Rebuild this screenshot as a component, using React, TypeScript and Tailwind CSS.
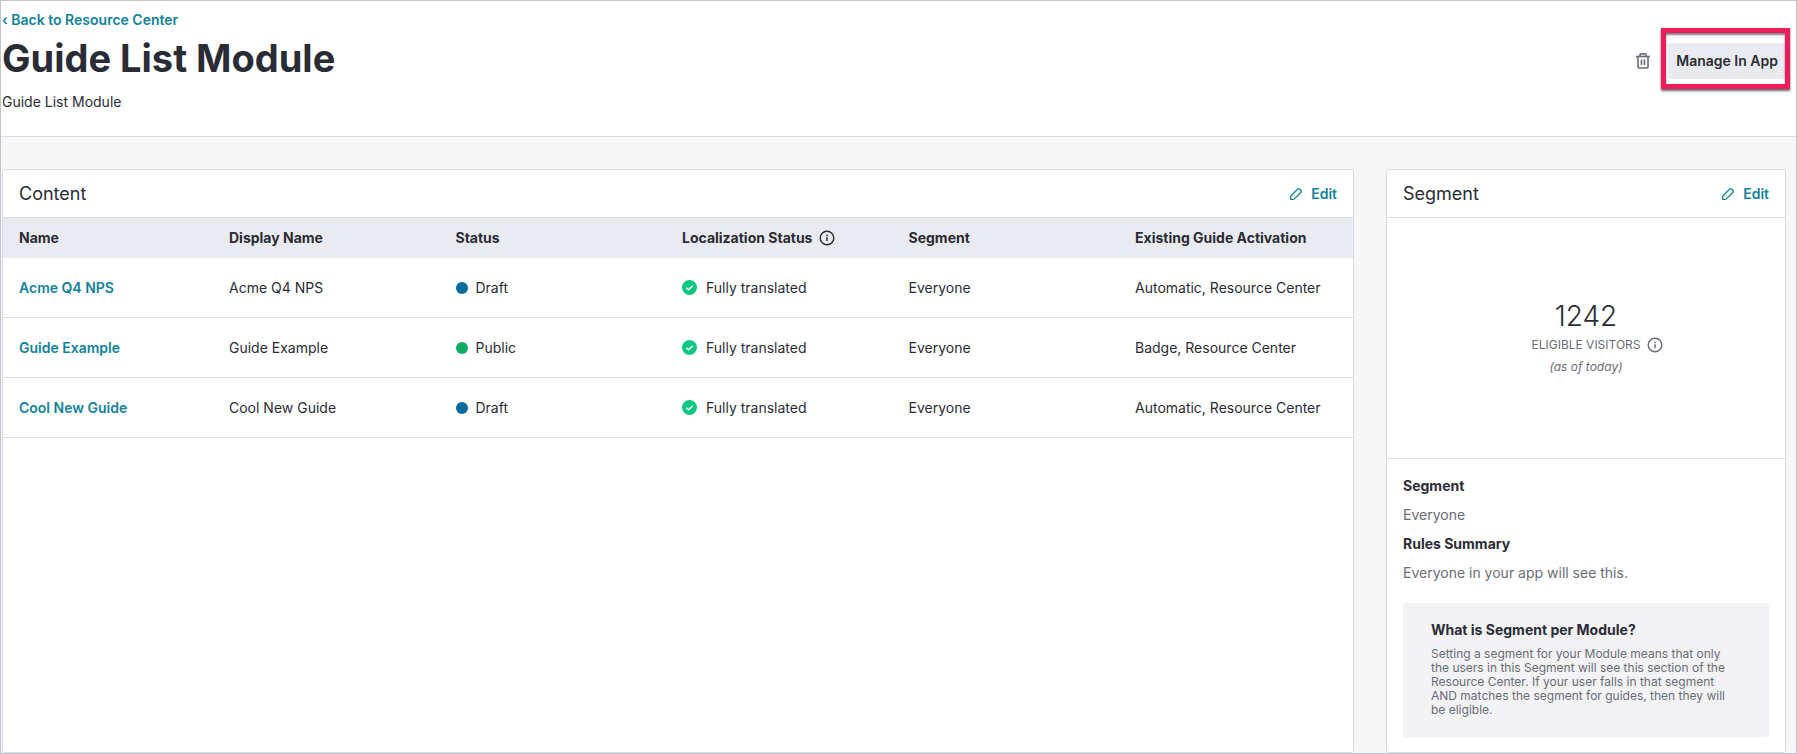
import type { ReactNode } from "react";

const GUIDES = [
  { name: "Acme Q4 NPS", status: "Draft", dot: "bg-[#066a9e]", segment: "Everyone", activation: "Automatic, Resource Center" },
  { name: "Guide Example", status: "Public", dot: "bg-[#0fad62]", segment: "Everyone", activation: "Badge, Resource Center" },
  { name: "Cool New Guide", status: "Draft", dot: "bg-[#066a9e]", segment: "Everyone", activation: "Automatic, Resource Center" },
];

function InfoIcon() {
  return (
    <svg className="size-4 shrink-0" viewBox="0 0 16 16" fill="none" aria-hidden="true">
      <circle cx="8" cy="8" r="6.8" stroke="currentColor" strokeWidth="1.4" />
      <path d="M8 7.2v3.8" stroke="currentColor" strokeWidth="1.5" />
      <circle cx="8" cy="5.4" r="0.9" fill="currentColor" />
    </svg>
  );
}

function PencilIcon() {
  return (
    <svg className="size-3.5" viewBox="0 0 14 14" fill="none" stroke="currentColor" strokeWidth="1.3" strokeLinejoin="round" aria-hidden="true">
      <path d="M1.7 12.3v-2.6a1.400 1.400 0 0 1 .4-1l6.700-6.700a1.200 1.200 0 0 1 1.700 0l1.500 1.500a1.200 1.200 0 0 1 0 1.700l-6.700 6.700a1.400 1.400 0 0 1-1 .4z" />
    </svg>
  );
}

function CheckIcon() {
  return (
    <svg className="size-[15px] shrink-0" viewBox="0 0 15 15" fill="none" aria-hidden="true">
      <circle cx="7.5" cy="7.5" r="7.5" fill="#0bc783" />
      <path d="M4.3 7.7l2.2 2 4.2-4" stroke="#fff" strokeWidth="1.4" />
    </svg>
  );
}

function TrashIcon() {
  return (
    <svg className="h-4 w-[14px]" viewBox="0 0 14 16" fill="none" stroke="currentColor" strokeWidth="1.6" aria-hidden="true">
      <path d="M0 3.5h14" />
      <path d="M4 3.3V1.7a.8.8 0 0 1 .8-.8h4.4a.8.8 0 0 1 .8.8v1.6" />
      <path d="M2 3.5V14a1 1 0 0 0 1 1h8a1 1 0 0 0 1-1V3.5" />
      <path d="M5.5 6.5V12M8.5 6.5V12" />
    </svg>
  );
}

function CardHeader({ title }: { title: string }) {
  return (
    <div className="flex h-12 items-center justify-between border-b border-[#dadce5] px-4">
      <h2 className="text-lg">{title}</h2>
      <button type="button" aria-label={`Edit ${title}`} className="flex items-center gap-2 text-sm font-semibold text-[#128297]">
        <PencilIcon />
        Edit
      </button>
    </div>
  );
}

function Th({ children }: { children: ReactNode }) {
  return (
    <th scope="col" className="px-4 text-left font-bold whitespace-nowrap">
      {children}
    </th>
  );
}

function Td({ children }: { children: ReactNode }) {
  return <td className="h-[60px] border-b border-[#dadce5] px-4 whitespace-nowrap">{children}</td>;
}

export default function App() {
  return (
    <div className="flex min-h-screen flex-col border border-[#bfc6cb] bg-[#f7f7f8] font-[Inter,sans-serif] text-sm text-[#2a2c35]">
      <header className="flex items-center justify-between border-b border-[#dadce5] bg-white pt-[9px] pr-[10px] pb-5 pl-px">
        <div>
          <a href="#resource-center" className="block leading-5 font-semibold text-[#128297]">
            ‹ Back to Resource Center
          </a>
          <h1 className="mt-2 text-[38px] leading-10 font-bold">Guide List Module</h1>
          <p className="mt-[14px] mb-1 leading-5">Guide List Module</p>
        </div>
        <div className="flex items-center gap-[18px] pb-1">
          <button type="button" aria-label="Delete module" className="text-[#6a6c75]">
            <TrashIcon />
          </button>
          <div className="relative">
            <button type="button" className="h-9 rounded-[3px] bg-[#eaebf0] px-2 font-semibold whitespace-nowrap">
              Manage In App
            </button>
            <div className="pointer-events-none absolute -top-[15px] -right-1 -bottom-[10px] -left-[7px] border-5 border-[#ed1e5b] shadow-[0_2px_2px_rgba(0,0,0,0.6),inset_0_2px_2px_rgba(0,0,0,0.5)]" />
          </div>
        </div>
      </header>

      <main className="flex grow gap-8 pt-8 pr-[10px] pl-px">
        <section className="min-w-0 grow rounded-[3px] border border-[#dadce5] bg-white">
          <CardHeader title="Content" />
          <table className="w-full table-fixed border-separate border-spacing-0">
            <colgroup>
              <col className="w-[210px]" />
              <col />
              <col />
              <col />
              <col />
              <col className="w-[234px]" />
            </colgroup>
            <thead>
              <tr className="h-10 bg-[#eaebf0]">
                <Th>Name</Th>
                <Th>Display Name</Th>
                <Th>Status</Th>
                <Th>
                  <span className="flex items-center gap-[7px]">
                    Localization Status
                    <InfoIcon />
                  </span>
                </Th>
                <Th>Segment</Th>
                <Th>Existing Guide Activation</Th>
              </tr>
            </thead>
            <tbody>
              {GUIDES.map((guide) => (
                <tr key={guide.name}>
                  <Td>
                    <a href="#guide" className="font-semibold text-[#128297]">{guide.name}</a>
                  </Td>
                  <Td>{guide.name}</Td>
                  <Td>
                    <span className="flex items-center gap-2">
                      <span className={`size-3 rounded-full ${guide.dot}`} />
                      {guide.status}
                    </span>
                  </Td>
                  <Td>
                    <span className="flex items-center gap-[9px]">
                      <CheckIcon />
                      Fully translated
                    </span>
                  </Td>
                  <Td>{guide.segment}</Td>
                  <Td>{guide.activation}</Td>
                </tr>
              ))}
            </tbody>
          </table>
        </section>

        <aside className="w-[400px] shrink-0 rounded-[3px] border border-[#dadce5] bg-white">
          <CardHeader title="Segment" />
          <div className="flex h-[241px] flex-col items-center justify-center border-b border-[#dadce5] pb-[3px] text-xs text-[#6a6c75]">
            <p className="text-[28px] leading-9 font-light text-[#2a2c35]">1242</p>
            {/* the icon hangs to the right so that the label is what gets centred */}
            <p className="relative mt-[3px] leading-4">
              ELIGIBLE VISITORS
              <span className="absolute top-0 left-full ml-[6px]">
                <InfoIcon />
              </span>
            </p>
            <p className="mt-[6px] leading-4 italic">(as of today)</p>
          </div>
          <div className="px-4 pt-[17px] pb-[15px]">
            <dl className="leading-5">
              <dt className="font-bold">Segment</dt>
              <dd className="mt-[9px] text-[#6a6c75]">Everyone</dd>
              <dt className="mt-[9px] font-bold">Rules Summary</dt>
              <dd className="mt-[9px] text-[#6a6c75]">Everyone in your app will see this.</dd>
            </dl>
            <div className="mt-5 rounded-[3px] bg-[#f3f3f6] px-7 pt-[17px] pb-5">
              <h3 className="leading-5 font-bold">What is Segment per Module?</h3>
              <p className="mt-[7px] text-xs leading-[14px] text-[#6a6c75]">
                Setting a segment for your Module means that only the users in this Segment will see this section of the
                Resource Center. If your user falls in that segment AND matches the segment for guides, then they will be
                eligible.
              </p>
            </div>
          </div>
        </aside>
      </main>
    </div>
  );
}
